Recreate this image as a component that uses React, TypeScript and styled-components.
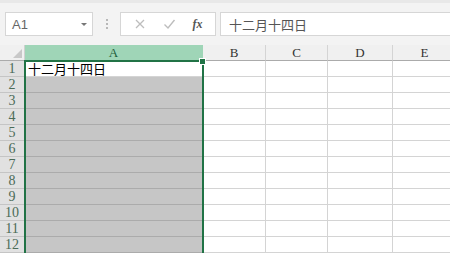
import React from "react";
import styled, { createGlobalStyle } from "styled-components";

const Global = createGlobalStyle`
  html, body { margin: 0; padding: 0; background: #ffffff; overflow: hidden; }
  body { width: 450px; height: 253px; }
`;

const Page = styled.div`
  width: 450px;
  height: 253px;
  overflow: hidden;
  display: flex;
  flex-direction: column;
  font-family: "Liberation Sans", "Noto Sans CJK SC", sans-serif;
`;

const Toolbar = styled.div`
  height: 45px;
  box-sizing: border-box;
  background: #f3f3f3;
  border-top: 3px solid #e8e8e8;
  padding: 9px 0 0 5px;
  display: flex;
  align-items: flex-start;
  flex-shrink: 0;
`;

const NameBox = styled.div`
  width: 88px;
  height: 24px;
  box-sizing: border-box;
  background: #fff;
  border: 1px solid #d6d6d6;
  display: flex;
  align-items: center;
  justify-content: space-between;
  padding: 0 5px 0 6px;
  color: #666;
  font-size: 13px;
`;

const Caret = styled.span`
  width: 0;
  height: 0;
  border-left: 3px solid transparent;
  border-right: 3px solid transparent;
  border-top: 3px solid #777;
`;

const Dots = styled.div`
  width: 27px;
  height: 24px;
  display: flex;
  flex-direction: column;
  align-items: center;
  justify-content: center;
  gap: 2px;
`;

const Dot = styled.span`
  width: 2px;
  height: 2px;
  background: #b8b8b8;
`;

const FxBox = styled.div`
  width: 96px;
  height: 24px;
  box-sizing: border-box;
  background: #fff;
  border: 1px solid #d6d6d6;
  display: flex;
  align-items: center;
  justify-content: space-around;
  padding: 0 4px;
`;

const FxText = styled.span`
  font-family: "Liberation Serif", serif;
  font-style: italic;
  font-weight: bold;
  font-size: 12px;
  color: #555;
`;

const Formula = styled.div`
  margin-left: 4px;
  flex: 1;
  height: 24px;
  box-sizing: border-box;
  background: #fff;
  border: 1px solid #d6d6d6;
  border-right: none;
  display: flex;
  align-items: center;
  padding-left: 8px;
  font-family: "Noto Sans CJK SC", sans-serif;
  font-size: 13px;
  color: #555;
`;

const Sheet = styled.div`
  position: relative;
  flex: 1;
  display: grid;
  grid-template-columns: 25px 178px 63px 62px 65px 64px;
  grid-template-rows: 16px repeat(12, 16px);
  background: #fff;
  overflow: hidden;
`;

const Corner = styled.div`
  background: #f0f0f0;
  border-bottom: 1px solid #ababab;
  border-right: 1px solid #d0d0d0;
  box-sizing: border-box;
  position: relative;
  &::after {
    content: "";
    position: absolute;
    right: 2px;
    bottom: 2px;
    width: 0;
    height: 0;
    border-left: 9px solid transparent;
    border-bottom: 9px solid #c8c8c8;
  }
`;

const ColHead = styled.div<{ $sel?: boolean }>`
  box-sizing: border-box;
  background: ${(p) => (p.$sel ? "#9fd5b7" : "#f0f0f0")};
  border-bottom: 1px solid ${(p) => (p.$sel ? "#217346" : "#ababab")};
  border-right: 1px solid ${(p) => (p.$sel ? "#9fd5b7" : "#d4d4d4")};
  display: flex;
  align-items: center;
  justify-content: center;
  font-family: "Liberation Serif", serif;
  font-size: 13px;
  color: ${(p) => (p.$sel ? "#1e5e3a" : "#333")};
  padding-top: 1px;
`;

const RowHead = styled.div`
  box-sizing: border-box;
  background: #e1e1e1;
  border-bottom: 1px solid #c5c5c5;
  border-right: 1px solid #ababab;
  display: flex;
  align-items: center;
  justify-content: center;
  font-family: "Liberation Serif", serif;
  font-size: 14px;
  color: #4b6b57;
`;

const Cell = styled.div<{ $sel?: boolean; $active?: boolean }>`
  box-sizing: border-box;
  background: ${(p) => (p.$active ? "#fff" : p.$sel ? "#c6c6c6" : "#fff")};
  border-bottom: 1px solid ${(p) => (p.$sel && !p.$active ? "#ababab" : "#d4d4d4")};
  border-right: 1px solid ${(p) => (p.$sel ? "#c6c6c6" : "#d4d4d4")};
  font-family: "Noto Sans CJK SC", sans-serif;
  font-size: 13px;
  line-height: 16px;
  color: #000;
  padding-left: 3px;
  white-space: nowrap;
`;

const Selection = styled.div`
  position: absolute;
  left: 24px;
  top: 15px;
  width: 180px;
  height: 210px;
  box-sizing: border-box;
  border: 2px solid #217346;
  border-bottom: none;
  pointer-events: none;
  &::after {
    content: "";
    position: absolute;
    right: -4px;
    top: -4px;
    width: 5px;
    height: 5px;
    background: #217346;
    border: 1px solid #fff;
  }
`;

const cols = ["B", "C", "D", "E"];
const rows = Array.from({ length: 12 }, (_, i) => i + 1);

export default function App() {
  return (
    <>
      <Global />
      <Page>
        <Toolbar>
          <NameBox>
            <span>A1</span>
            <Caret />
          </NameBox>
          <Dots>
            <Dot />
            <Dot />
            <Dot />
          </Dots>
          <FxBox>
            <svg width="12" height="12" viewBox="0 0 12 12">
              <path d="M2 2 L10 10 M10 2 L2 10" stroke="#bdbdbd" strokeWidth="1.3" fill="none" />
            </svg>
            <svg width="13" height="12" viewBox="0 0 13 12">
              <path d="M1.5 6.5 L5 10 L11.5 2" stroke="#bdbdbd" strokeWidth="1.4" fill="none" />
            </svg>
            <FxText>fx</FxText>
          </FxBox>
          <Formula>十二月十四日</Formula>
        </Toolbar>
        <Sheet>
          <Corner />
          <ColHead $sel>A</ColHead>
          {cols.map((c) => (
            <ColHead key={c}>{c}</ColHead>
          ))}
          {rows.map((r) => (
            <React.Fragment key={r}>
              <RowHead>{r}</RowHead>
              <Cell $sel $active={r === 1}>
                {r === 1 ? "十二月十四日" : ""}
              </Cell>
              {cols.map((c) => (
                <Cell key={c} />
              ))}
            </React.Fragment>
          ))}
          <Selection />
        </Sheet>
      </Page>
    </>
  );
}
